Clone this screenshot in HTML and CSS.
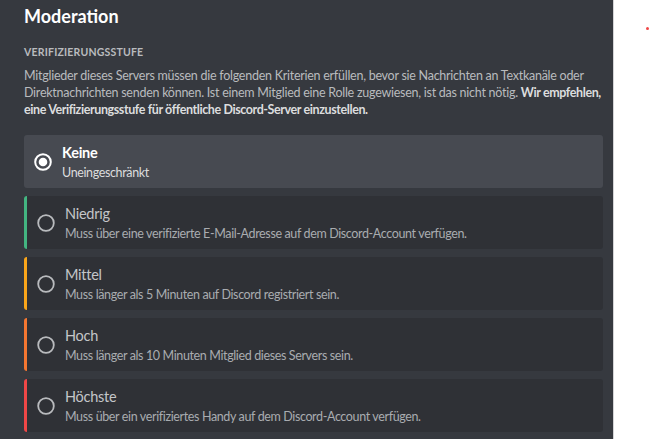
FILE: index.html
```html
<!DOCTYPE html>
<html lang="de">
<head>
<meta charset="utf-8">
<title>Moderation</title>
<link rel="stylesheet" href="styles.css">
</head>
<body>
<div class="page">
  <main class="panel">
    <h1 class="title">Moderation</h1>
    <h2 class="section">Verifizierungsstufe</h2>
    <p class="desc">Mitglieder dieses Servers müssen die folgenden Kriterien erfüllen, bevor sie Nachrichten an Textkanäle oder<br>Direktnachrichten senden können. Ist einem Mitglied eine Rolle zugewiesen, ist das nicht nötig. <strong>Wir empfehlen,<br>eine Verifizierungsstufe für öffentliche Discord-Server einzustellen.</strong></p>
    <div class="options">
      <div class="option selected">
        <svg class="radio" viewBox="0 0 18 18" width="18" height="18"><circle cx="9" cy="9" r="7.8" fill="none" stroke="#ffffff" stroke-width="2"/><circle cx="9" cy="9" r="4.3" fill="#ffffff"/></svg>
        <div class="text"><div class="name">Keine</div><div class="info">Uneingeschränkt</div></div>
      </div>
      <div class="option low">
        <svg class="radio" viewBox="0 0 18 18" width="18" height="18"><circle cx="9" cy="9" r="7.8" fill="none" stroke="#b9bbbe" stroke-width="1.8"/></svg>
        <div class="text"><div class="name">Niedrig</div><div class="info">Muss über eine verifizierte E-Mail-Adresse auf dem Discord-Account verfügen.</div></div>
      </div>
      <div class="option medium">
        <svg class="radio" viewBox="0 0 18 18" width="18" height="18"><circle cx="9" cy="9" r="7.8" fill="none" stroke="#b9bbbe" stroke-width="1.8"/></svg>
        <div class="text"><div class="name">Mittel</div><div class="info">Muss länger als 5 Minuten auf Discord registriert sein.</div></div>
      </div>
      <div class="option high">
        <svg class="radio" viewBox="0 0 18 18" width="18" height="18"><circle cx="9" cy="9" r="7.8" fill="none" stroke="#b9bbbe" stroke-width="1.8"/></svg>
        <div class="text"><div class="name">Hoch</div><div class="info">Muss länger als 10 Minuten Mitglied dieses Servers sein.</div></div>
      </div>
      <div class="option highest">
        <svg class="radio" viewBox="0 0 18 18" width="18" height="18"><circle cx="9" cy="9" r="7.8" fill="none" stroke="#b9bbbe" stroke-width="1.8"/></svg>
        <div class="text"><div class="name">Höchste</div><div class="info">Muss über ein verifiziertes Handy auf dem Discord-Account verfügen.</div></div>
      </div>
    </div>
  </main>
  <aside class="side"><span class="dot"></span></aside>
</div>
</body>
</html>
```
FILE: styles.css
```css
* { box-sizing: border-box; }
html, body { margin: 0; padding: 0; background: #ffffff; }
body { font-family: Lato, "Open Sans", sans-serif; width: 650px; height: 439px; overflow: hidden; }
.page { display: flex; height: 439px; }
.panel {
  width: 614px;
  flex: none;
  background: #36393f;
  border-right: 1px solid #d4d4d6;
  padding: 4px 10px 0 24px;
}
.side { flex: 1; position: relative; }
.dot { position: absolute; left: 32px; top: 27px; width: 3px; height: 3px; border-radius: 50%; background: #f04747; }
.title { margin: 0; font-size: 18px; line-height: 24px; font-weight: 700; color: #ffffff; }
.section { margin: 17px 0 0; font-size: 10.5px; line-height: 14px; font-weight: 700; color: #b9bbbe; text-transform: uppercase; letter-spacing: 0.2px; }
.desc { margin: 9px 0 0; font-size: 12.5px; line-height: 16.8px; color: #b9bbbe; letter-spacing: -0.26px; white-space: nowrap; }
.desc strong { color: #dcddde; font-weight: 700; letter-spacing: -0.4px; }
.options { margin-top: 17px; display: flex; flex-direction: column; gap: 8px; }
.option {
  display: flex;
  align-items: center;
  height: 53px;
  padding: 0 10px;
  border-radius: 3px;
  background: #2f3136;
}
.option.selected { background: #474a51; }
.option.low { border-left: 3px solid #43b581; }
.option.medium { border-left: 3px solid #faa61a; }
.option.high { border-left: 3px solid #f57731; }
.option.highest { border-left: 3px solid #f04747; }
.radio { flex: none; margin-right: 10px; }
.text { display: flex; flex-direction: column; }
.name { font-size: 14.5px; line-height: 21px; font-weight: 400; color: #c4c6c9; letter-spacing: -0.25px; }
.info { font-size: 12.5px; line-height: 19px; color: #a9acb0; letter-spacing: -0.37px; }
.selected .name { color: #ffffff; font-weight: 700; }
.selected .info { color: #dcddde; }
```
